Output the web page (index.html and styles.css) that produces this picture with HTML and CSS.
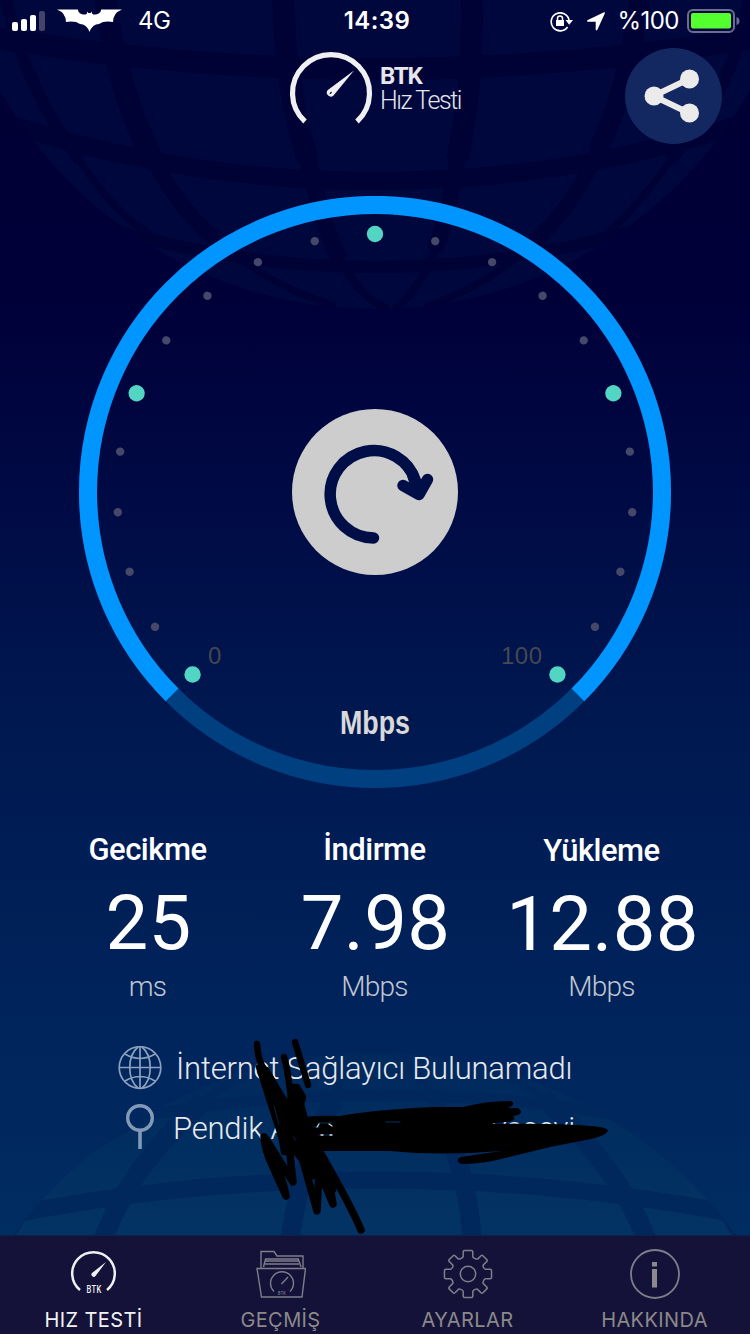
FILE: index.html
```html
<!DOCTYPE html>
<html lang="tr">
<head>
<meta charset="utf-8">
<title>BTK Hız Testi</title>
<link rel="stylesheet" href="styles.css">
</head>
<body>
<div class="screen">
  <svg class="backdrop" viewBox="0 0 750 1235" aria-hidden="true">
    <defs>
      <clipPath id="topGlobe"><circle cx="375" cy="-122" r="431"/></clipPath>
      <clipPath id="lowGlobe"><circle cx="375" cy="1503" r="450"/></clipPath>
      <linearGradient id="lowFill" gradientUnits="userSpaceOnUse" x1="0" y1="1053" x2="0" y2="1235"><stop offset="0" stop-color="#00295d"/><stop offset=".5" stop-color="#012e60"/><stop offset="1" stop-color="#033364"/></linearGradient>
    </defs>
    <circle class="globe-top" cx="375" cy="-122" r="431"/>
    <g class="line-top" clip-path="url(#topGlobe)">
      <path stroke-width="22" d="M-10 37Q180 69 375 69T760 37"/>
      <path stroke-width="18" d="M0 121Q180 181 375 181T750 121"/>
      <path stroke-width="12" d="M110 229Q240 267 375 267T640 229"/>
      <path stroke-width="22" d="M283 -5Q285 90 308 160"/>
      <path stroke-width="17" d="M307 155Q322 225 340 260"/>
      <path stroke-width="8" d="M338 255Q358 297 388 309"/>
      <path stroke-width="22" d="M472 -5Q473 90 457 160"/>
      <path stroke-width="16" d="M458 155Q450 210 435 250"/>
      <path stroke-width="8" d="M437 245Q420 290 395 309"/>
      <path stroke-width="22" d="M105 -5Q117 90 153 160"/>
      <path stroke-width="15" d="M150 153Q175 205 214 238"/>
      <path stroke-width="7" d="M210 233Q260 283 335 306"/>
      <path stroke-width="20" d="M640 -5Q628 90 598 150"/>
      <path stroke-width="15" d="M600 146Q575 205 533 243"/>
      <path stroke-width="7" d="M537 240Q490 285 425 307"/>
      <path stroke-width="12" d="M5 -5Q25 90 80 160"/>
      <path stroke-width="7" d="M76 155Q115 215 150 234"/>
      <path stroke-width="12" d="M750 -5Q735 90 670 160"/>
      <path stroke-width="7" d="M674 155Q630 220 590 246"/>
    </g>
    <circle fill="url(#lowFill)" cx="375" cy="1503" r="450"/>
    <g class="line-low" clip-path="url(#lowGlobe)">
      <path stroke-width="11" d="M120 1120Q250 1095 385 1095T650 1121"/>
      <path stroke-width="17" d="M-5 1218Q180 1180 375 1180T755 1218"/>
      <path stroke-width="7" d="M360 1053Q340 1070 333 1105"/>
      <path stroke-width="19" d="M334 1100Q300 1165 290 1240"/>
      <path stroke-width="9" d="M395 1053Q422 1070 436 1110"/>
      <path stroke-width="19" d="M436 1107Q468 1170 472 1240"/>
      <path stroke-width="8" d="M310 1058Q235 1070 200 1105"/>
      <path stroke-width="19" d="M203 1102Q130 1165 103 1240"/>
      <path stroke-width="8" d="M440 1057Q510 1070 545 1100"/>
      <path stroke-width="19" d="M543 1097Q620 1170 647 1240"/>
      <path stroke-width="10" d="M145 1117Q45 1165 8 1240"/>
      <path stroke-width="10" d="M620 1117Q700 1165 740 1240"/>
    </g>
  </svg>

  <header class="status">
    <div class="status-left">
      <svg width="34" height="21" viewBox="0 0 34 21"><rect x="0" y="11" width="6" height="9" rx="2" fill="#fff"/><rect x="9" y="8" width="6" height="12" rx="2" fill="#fff"/><rect x="18" y="4" width="6" height="16" rx="2" fill="#fff"/><rect x="27" y="0" width="6" height="20" rx="2" fill="#44436b"/></svg>
      <svg width="65" height="24" viewBox="0 0 65 24"><path fill="#fff" d="M0 .5H21C21 4 24 5.500 27.500 5.500C29.500 5.500 30 5 30.300 2.500L31.300 4H33.700L34.700 2.500C35 5 35.500 5.500 37.500 5.500C41 5.500 44 4 44 .5H65Q56 4 56 13Q47 11.500 42 15Q35.500 15 32.500 23Q29.500 15 23 15Q18 11.500 9 13Q9 4 0 .5Z"/></svg>
      <span class="carrier">4G</span>
    </div>
    <time class="clock">14:39</time>
    <div class="status-right">
      <svg width="23" height="21" viewBox="0 0 23 21"><path fill="none" stroke="#fff" stroke-width="1.700" d="M17.600 16A9 9 0 1 1 19 9"/><path fill="#fff" d="M15.500 9H23L19.200 13.800ZM6 9H14V15H6Z"/><path fill="none" stroke="#fff" stroke-width="1.500" d="M7.500 9V7.500A2.500 2.500 0 0 1 12.500 7.500V9"/></svg>
      <svg width="18" height="19" viewBox="0 0 18 19"><path fill="#fff" d="M17 .3Q18.300 0 17.900 1.200L10.500 17.500Q9 19.500 8.700 17.500V9.800H1Q-1 9.400.8 8Z"/></svg>
      <span class="percent">%100</span>
      <svg width="53" height="24" viewBox="0 0 53 24"><rect x="1" y="1" width="46" height="22" rx="5" fill="none" stroke="#6d6d91" stroke-width="2"/><rect x="4" y="4" width="40" height="15.500" rx="2" fill="#53ff2e"/><path d="M49.500 8Q52.500 9 52.500 12T49.500 16Z" fill="#6d6d91"/></svg>
    </div>
  </header>

  <section class="brand">
    <svg class="brand-mark" width="84" height="76" viewBox="0 0 84 76"><path fill="none" stroke="#f0eff2" stroke-width="5.200" d="M16 70.500A38.500 38.500 0 1 1 68 70.500"/><path fill="#f0eff2" fill-rule="evenodd" d="M65 19.500L44.500 44.500A4 4 0 0 1 38.500 39.300ZM40.500 43.500L42.500 42.300L43 40.500L41 41.500Z"/></svg>
    <div class="brand-name"><strong>BTK</strong><span>Hız Testi</span></div>
    <button class="share" aria-label="Paylaş"><svg width="96" height="96" viewBox="0 0 96 96"><path fill="none" stroke="#ebebeb" stroke-width="6" d="M63 31L27.500 48L63 65"/><g fill="#ebebeb"><circle cx="28" cy="48" r="9.500"/><circle cx="63.500" cy="31" r="9.500"/><circle cx="63.500" cy="65" r="9.500"/></g></svg></button>
  </section>

  <svg class="gauge" width="592" height="592" viewBox="0 0 592 592">
    <defs><circle id="big" cx="296" cy="38" r="8.200" fill="#53d5c4"/><circle id="dot" cx="296" cy="38" r="4.200" fill="#46486a"/></defs>
    <g fill="none" stroke-width="18"><circle cx="296" cy="296" r="287" stroke="#004080"/><path stroke="#0095ff" d="M93.100 498.900A287 287 0 1 1 498.900 498.900"/></g>
    <use href="#big" transform="rotate(-135 296 296)"/><use href="#big" transform="rotate(-67.500 296 296)"/><use href="#big"/><use href="#big" transform="rotate(67.500 296 296)"/><use href="#big" transform="rotate(135 296 296)"/>
    <use href="#dot" transform="rotate(-121.500 296 296)"/><use href="#dot" transform="rotate(-108 296 296)"/><use href="#dot" transform="rotate(-94.500 296 296)"/><use href="#dot" transform="rotate(-81 296 296)"/>
    <use href="#dot" transform="rotate(-54 296 296)"/><use href="#dot" transform="rotate(-40.500 296 296)"/><use href="#dot" transform="rotate(-27 296 296)"/><use href="#dot" transform="rotate(-13.500 296 296)"/>
    <use href="#dot" transform="rotate(13.500 296 296)"/><use href="#dot" transform="rotate(27 296 296)"/><use href="#dot" transform="rotate(40.500 296 296)"/><use href="#dot" transform="rotate(54 296 296)"/>
    <use href="#dot" transform="rotate(81 296 296)"/><use href="#dot" transform="rotate(94.500 296 296)"/><use href="#dot" transform="rotate(108 296 296)"/><use href="#dot" transform="rotate(121.500 296 296)"/>
    <circle cx="296" cy="296" r="83" fill="#cdcdcd"/>
    <g fill="none" stroke="#000e48" stroke-width="11.500" stroke-linecap="round" stroke-linejoin="round"><path d="M294.500 342A43.700 43.700 0 1 1 336.500 285"/><path d="M324 289.500L340 298.500L348.500 283.500"/><path d="M334 280L339 295"/></g>
    <text class="scale" x="129" y="468" textLength="14">0</text>
    <text class="scale" x="422" y="468" textLength="41">100</text>
    <text class="unit" x="261" y="538" textLength="70" lengthAdjust="spacingAndGlyphs">Mbps</text>
  </svg>

  <section class="stats">
    <div class="stat"><h2>Gecikme</h2><b>25</b><span>ms</span></div>
    <div class="stat"><h2>İndirme</h2><b>7.98</b><span>Mbps</span></div>
    <div class="stat last"><h2>Yükleme</h2><b>12.88</b><span>Mbps</span></div>
  </section>

  <section class="info">
    <div class="info-row">
      <svg width="44" height="44" viewBox="0 0 44 44" fill="none" stroke="#8ba0bd" stroke-width="1.700"><circle cx="22" cy="21.500" r="20.800"/><path d="M1 21.500H43M22 1V42M20 1C9 10 9 33 20 42M24 1C35 10 35 33 24 42M7 8Q22 17 37 8M7 35Q22 26 37 35"/></svg>
      <span class="provider">İnternet Sağlayıcı Bulunamadı</span>
    </div>
    <div class="info-row">
      <svg width="44" height="46" viewBox="0 0 44 46" fill="none" stroke="#8499b8"><circle cx="22" cy="14" r="12.300" stroke-width="3.400"/><path stroke-width="3.600" d="M22 26V45"/></svg>
      <span class="place"><span>Pendik A</span><span class="place-end">yasevi</span></span>
    </div>
  </section>

  <svg class="scribble" viewBox="0 0 750 1334" fill="none" stroke="#000" stroke-width="6.500" stroke-linecap="round" stroke-linejoin="round">
    <path d="M257 1044Q258 1063 266 1072L290 1110M259 1067L284 1145M284 1057Q287 1066 290 1090M295 1042L308 1085"/>
    <path fill="#000" stroke-width="4" d="M259 1067L267 1069L290 1108V1145L280 1132L272 1110Z"/>
    <path fill="#000" d="M291 1087L297 1087L303 1097L301 1104L308 1131L318 1150L333 1190L328 1192L320 1172L313 1176L302 1160L296 1152H284L281 1133L287 1120L290 1108Z"/>
    <path stroke-width="7.500" d="M264 1137Q265 1150 272 1165L286 1196Q283 1178 266 1139L293 1182L289 1145M300 1150L317 1211L319 1170L333 1204L326 1165M320 1152Q335 1178 345 1197Q357 1220 361 1230"/>
    <path fill="#000" stroke="none" d="M303 1117Q322 1115 340 1116Q370 1110 433 1107H463Q486 1101 511 1101Q517 1104 508 1108H518Q524 1112 518 1115L513 1116Q518 1121 505 1122L490 1124Q560 1123 590 1126Q608 1127 608 1131Q604 1137 586 1140L550 1147L497 1160Q480 1164 461 1164Q454 1160 461 1157L501 1151Q440 1156 390 1151H309Z"/>
    <path stroke="#06305f" stroke-width="1" d="M314 1127H320M319 1135H332M386 1122H400M318 1123H332"/>
    <path stroke="#ddd" stroke-width="1.300" d="M319 1124L317 1127M329 1124L332 1126M321 1135H323M330 1135H332"/>
    <path stroke="#06305f" stroke-width=".7" d="M274 1106L279 1124M293 1136L296 1141"/>
  </svg>

  <nav class="tabs">
    <a class="tab active"><svg width="50" height="50" viewBox="0 0 50 50"><path fill="none" stroke="#f0eff2" stroke-width="2.500" d="M11 41A21.300 21.300 0 1 1 38 41"/><path fill="#f0eff2" d="M37 13L26.500 27A2.300 2.300 0 0 1 23 24Z"/><text x="17.500" y="44" class="mini" textLength="15" lengthAdjust="spacingAndGlyphs">BTK</text></svg><span>HIZ TESTİ</span></a>
    <a class="tab"><svg width="50" height="50" viewBox="0 0 50 50" fill="none" stroke="#7f7d89" stroke-width="1.400"><path d="M5 19V2.500H18L21 7H47V19M7.500 18L9 12H43L45 18M9 15H43M9.500 12V10H42.500V12M1 19.500H49.500L46 48H5.500Z"/><path d="M18 42.500A11.500 11.500 0 1 1 34 42.500"/><path d="M25.500 35L32 28"/><text x="22" y="45.500" class="mini dim" textLength="8" lengthAdjust="spacingAndGlyphs">BTK</text></svg><span>GEÇMİŞ</span></a>
    <a class="tab"><svg width="52" height="52" viewBox="-26 -26 52 52" fill="none" stroke="#7f7d89" stroke-width="1.600" stroke-linejoin="round"><circle r="8"/><path d="M-5 -23Q-5 -24.500 -3.500 -24.500H3.500Q5 -24.500 5 -23V-18Q5 -17 7.500 -16T10.500 -16L13.500 -19Q14.500 -20 15.500 -19L19.500 -15Q20.500 -14 19.500 -13L16.500 -10Q15 -9 16 -7T18 -5H23Q24.500 -5 24.500 -3.500V3.500Q24.500 5 23 5H18Q17 5 16 7.500T16.500 10.500L19.500 13.500Q20.500 14.500 19.500 15.500L15.500 19.500Q14.500 20.500 13.500 19.500L10.500 16.500Q9.500 15 7.500 16T5 18V23Q5 24.500 3.500 24.500H-3.500Q-5 24.500 -5 23V18Q-5 17 -7.500 16T-10.500 16.500L-13.500 19.500Q-14.500 20.500 -15.500 19.500L-19.500 15.500Q-20.500 14.500 -19.500 13.500L-16.500 10.500Q-15 9.500 -16 7.500T-18 5H-23Q-24.500 5 -24.500 3.500V-3.500Q-24.500 -5 -23 -5H-18Q-17 -5 -16 -7T-16.500 -10L-19.500 -13Q-20.500 -14 -19.500 -15L-15.500 -19Q-14.500 -20 -13.500 -19L-10.500 -16Q-9.500 -15 -7.500 -16T-5 -18Z"/></svg><span>AYARLAR</span></a>
    <a class="tab"><svg width="50" height="50" viewBox="0 0 50 50"><circle cx="25" cy="25" r="24" fill="none" stroke="#7f7d89" stroke-width="1.800"/><path fill="#8c8991" d="M22 13H27V17.500H22ZM22 20H27V38.500H22Z"/></svg><span>HAKKINDA</span></a>
  </nav>
</div>
</body>
</html>
```
FILE: styles.css
```css
* { box-sizing: border-box; }
body { margin: 0; }
.screen {
  position: relative;
  display: flex;
  flex-direction: column;
  width: 750px;
  height: 1334px;
  overflow: hidden;
  color: #fff;
  font-family: Roboto, "Open Sans", sans-serif;
  background: linear-gradient(#000033 0, #000039 300px, #000842 460px, #001850 720px, #00225a 980px, #002d62 1235px);
}
.backdrop { position: absolute; top: 0; left: 0; width: 750px; height: 1235px; }
.globe-top { fill: #00073c; }
.line-top { fill: none; stroke: #000135; }
.line-low { fill: none; stroke: #00285d; }
.status, .brand, .gauge, .stats, .info, .tabs { position: relative; }
.status {
  display: grid;
  grid-template-columns: 1fr auto 1fr;
  height: 40px;
  padding: 1px 10px 0 14px;
  font-family: Inter, "Liberation Sans", sans-serif;
  font-size: 24px;
  line-height: 40px;
}
.status-left, .status-right { display: flex; align-items: center; }
.status-left { gap: 11px; margin-left: -2px; }
.carrier { margin-left: 5px; letter-spacing: -.5px; }
.clock { font-weight: 600; letter-spacing: .4px; }
.status-right { justify-content: flex-end; gap: 8px; }
.status-right svg:nth-child(2) { margin-left: 6px; }
.percent { margin-left: 4px; letter-spacing: -.5px; }
.brand { display: flex; height: 156px; padding: 11px 28px 0 289px; }
.brand-name { display: flex; flex-direction: column; width: 85px; margin: 13px 0 0 7px; color: #e6e6ec; font-size: 25px; }
.brand-name strong { height: 24px; font-size: 24px; line-height: 25px; letter-spacing: -1.200px; font-weight: 700; }
.brand-name span { height: 25px; line-height: 25px; font-weight: 300; letter-spacing: -1.450px; white-space: nowrap; }
.share { width: 97px; height: 96px; margin: -3px 0 0 auto; padding: 0; border: 0; border-radius: 50%; background: #132860; }
.gauge { display: block; flex: none; margin-left: 79px; }
.scale { fill: #454751; font: 24px "Liberation Sans", sans-serif; }
.unit { fill: #d9d9d9; font: bold 33px "Liberation Sans Narrow", "Liberation Sans", sans-serif; }
.stats { display: grid; grid-template-columns: repeat(3, 227px); height: 242px; padding: 42px 0 0 34px; }
.stat { display: flex; flex-direction: column; align-items: center; }
.stat h2 { margin: 0; font-size: 31px; font-weight: 500; line-height: 40px; letter-spacing: -.5px; }
.stat b { font-size: 76px; font-weight: 400; line-height: 92px; margin-top: 7px; padding-left: 2px; letter-spacing: .3px; white-space: nowrap; }
.stat span { margin-top: 1px; color: #c3c6d0; font-size: 28px; font-weight: 300; line-height: 34px; letter-spacing: -.7px; }
.last h2, .last b { transform: translateY(1px); }
.info { display: flex; flex-direction: column; gap: 13px; height: 205px; padding: 15px 0 0 118px; color: #e8e9ee; font-size: 31px; font-weight: 300; }
.info-row { display: flex; align-items: center; height: 46px; white-space: nowrap; }
.provider { margin-left: 14px; letter-spacing: -.2px; }
.place { display: flex; flex: none; width: 402px; margin: 2px 0 0 11px; letter-spacing: -.2px; }
.place-end { margin-left: auto; }
.scribble { position: absolute; top: 0; left: 0; width: 750px; height: 1334px; z-index: 2; }
.tabs { display: grid; grid-template-columns: repeat(4, 187px); height: 99px; background: #141238; border-top: 1px solid #0b2149; }
.tab { display: flex; flex-direction: column; align-items: center; padding-top: 13px; color: #8b8989; font: 400 20px/24px Inter, "Liberation Sans", sans-serif; letter-spacing: .4px; }
.tab svg { flex: none; height: 50px; }
.tab span { margin-top: 9px; }
.active { color: #f2f2f2; }
.mini { fill: #f0eff2; stroke: none; font: 500 10px Roboto, sans-serif; }
.dim { fill: #7f7d89; font-size: 5px; }
```
